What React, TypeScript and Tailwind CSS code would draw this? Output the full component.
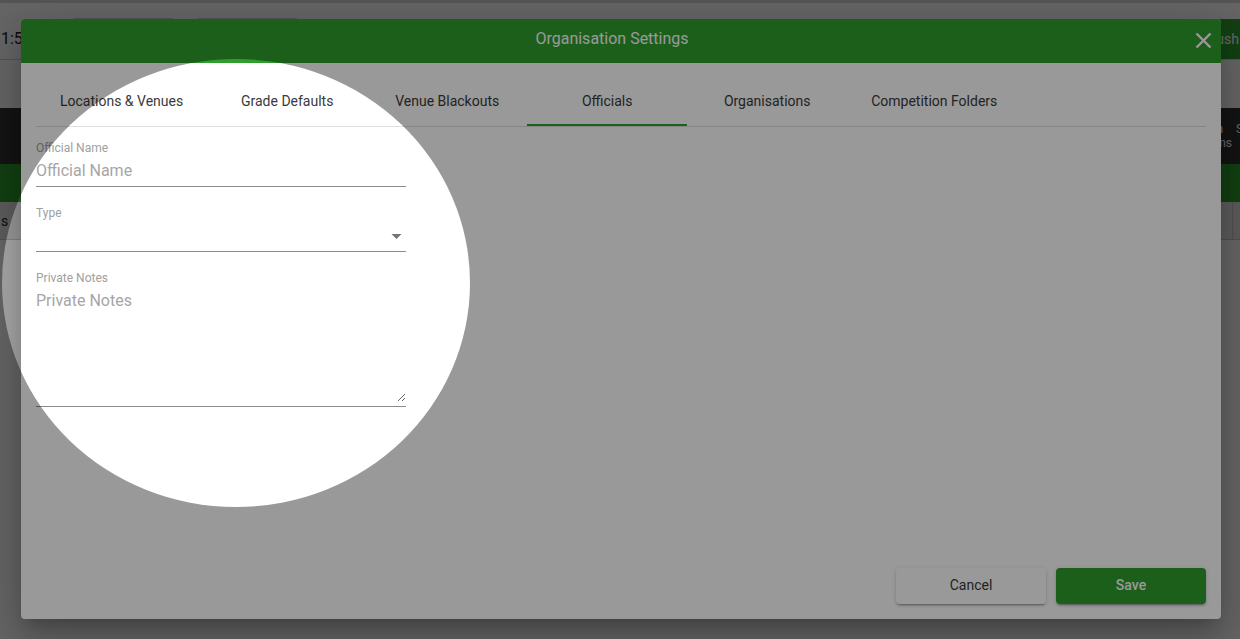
const tabs = ["Locations & Venues", "Grade Defaults", "Venue Blackouts", "Officials", "Organisations", "Competition Folders"];

const PageBehind = () => {
  return (
    <div className="flex flex-col h-full bg-[#fafafa] text-[#212121]">
      <div className="h-[3px] bg-[#d0d0d0]"></div>
      <div className="h-[15px]"></div>
      <div className="h-[42px] flex items-center justify-between border-b border-[#d0d0d0]">
        <div className="flex items-center gap-[25px] -ml-[8px]">
          <span className="text-base">11:59</span>
          <span className="ml-[17px] w-[99px] h-[42px] border-t border-[#cfcfcf]"></span>
          <span className="w-[99px] h-[42px] border-t border-[#cfcfcf]"></span>
        </div>
        <div className="h-[40px] self-start mt-px flex items-center pr-px pl-[6px] bg-[#2e9e2e] text-white text-sm">Push</div>
      </div>
      <div className="h-[48px]"></div>
      <div className="h-[56px] bg-[#313131] text-white text-xs flex justify-end items-center gap-1 overflow-hidden">
        <div className="text-center leading-[14px]">
          <div>Admin</div>
          <div>Locations</div>
        </div>
        <div className="w-[4px] self-start pt-[14px] leading-[14px] overflow-visible whitespace-nowrap">S</div>
      </div>
      <div className="h-[38px] bg-[#2e9e2e]"></div>
      <div className="h-[38px] bg-[#e4e4e4] border-b border-[#c4c4c4] flex items-center justify-between">
        <span className="text-sm pl-[1px]">s</span>
        <span className="h-full w-[8px] border-l border-[#c4c4c4]"></span>
      </div>
      <div className="flex-1"></div>
    </div>
  );
};

const App = () => {
  return (
    <div className="relative h-screen w-full overflow-hidden font-['Roboto',sans-serif]">
      <PageBehind />

      {/* dialog backdrop */}
      <div className="absolute inset-0 bg-black/[0.32]"></div>

      <div className="absolute left-[21px] top-[19px] w-[1200px] h-[600px] flex flex-col rounded bg-white shadow-[0_11px_15px_-7px_rgba(0,0,0,0.2),0_24px_38px_3px_rgba(0,0,0,0.14),0_9px_46px_8px_rgba(0,0,0,0.12)]">
        <div className="h-[44px] flex items-start rounded-t bg-[#2e9e2e] text-white">
          <h2 className="flex-1 pt-[10px] pl-[8px] text-center text-base leading-[20px]">Organisation Settings</h2>
          <button className="w-[19px] mr-[7px] mt-[13px] text-white">
            <svg width="17" height="17" viewBox="0 0 17 17" fill="none" stroke="currentColor" strokeWidth="2.4">
              <path d="M1.5 1.5 15.5 15.5M15.5 1.5 1.5 15.5" />
            </svg>
          </button>
        </div>

        <div className="flex-1 px-[15px] pt-[13px]">
          <div className="flex border-b border-[#e0e0e0] h-[51px]">
            {tabs.map((t) => (
              <div
                key={t}
                className={
                  t === "Officials"
                    ? "h-[50px] min-w-[160px] px-6 flex items-center justify-center text-sm text-[#3a3a3a] shadow-[inset_0_-2px_0_#2e9e2e]"
                    : "h-[50px] min-w-[160px] px-6 flex items-center justify-center text-sm text-[#3a3a3a]"
                }
              >
                {t}
              </div>
            ))}
          </div>

          <div className="w-[370px] pt-[15px] flex flex-col gap-5">
            <div>
              <label className="block text-xs leading-[13px] mb-px text-[#a0a0a0]">Official Name</label>
              <input
                placeholder="Official Name"
                className="block w-full h-[31px] pb-[2px] border-b border-[#8c8c8c] text-base outline-none placeholder:text-[#a6a6a6]"
              />
            </div>
            <div>
              <label className="block text-xs leading-[13px] mb-px text-[#a0a0a0]">Type</label>
              <div className="h-[31px] border-b border-[#8c8c8c] flex items-center justify-end pr-[4px]">
                <svg width="11" height="5" viewBox="0 0 11 5">
                  <path d="M0.5 0h10L5.5 5z" fill="#757575" />
                </svg>
              </div>
            </div>
            <div>
              <label className="block text-xs leading-[13px] mb-px text-[#a0a0a0]">Private Notes</label>
              <div className="h-[121px] border-b border-[#8c8c8c]">
                <textarea
                  placeholder="Private Notes"
                  className="block w-full h-[116px] pt-[5px] text-base leading-[19px] outline-none placeholder:text-[#a6a6a6]"
                ></textarea>
              </div>
            </div>
          </div>
        </div>

        <div className="flex justify-end gap-[10px] px-[15px] pb-[15px]">
          <button className="w-[150px] h-[36px] pb-[2px] rounded bg-white text-sm text-[#3a3a3a] shadow-[0_3px_1px_-2px_rgba(0,0,0,0.2),0_2px_2px_0_rgba(0,0,0,0.14),0_1px_5px_0_rgba(0,0,0,0.12)]">Cancel</button>
          <button className="w-[150px] h-[36px] pb-[2px] rounded bg-[#2e9e2e] text-sm font-medium text-white shadow-[0_3px_1px_-2px_rgba(0,0,0,0.2),0_2px_2px_0_rgba(0,0,0,0.14),0_1px_5px_0_rgba(0,0,0,0.12)]">Save</button>
        </div>
      </div>

      {/* spotlight, everything outside the ellipse is dimmed */}
      <div className="absolute left-[2px] top-[59px] w-[468px] h-[448px] rounded-[50%] pointer-events-none shadow-[0_0_0_1500px_rgba(0,0,0,0.4)]"></div>
    </div>
  );
};

export default App;
